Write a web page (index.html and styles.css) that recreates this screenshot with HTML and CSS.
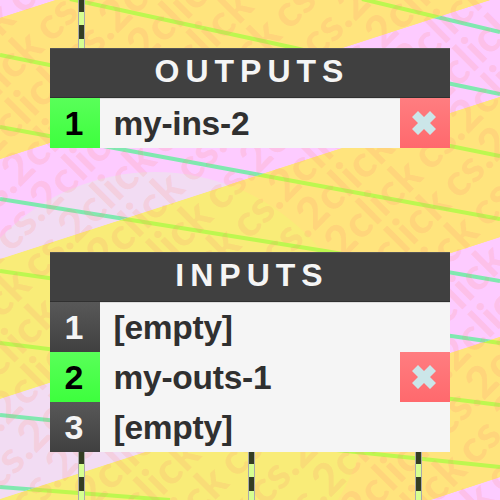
FILE: index.html
```
<!DOCTYPE html>
<html lang="en">
<head>
<meta charset="utf-8">
<title>Connections</title>
<link rel="stylesheet" href="styles.css">
</head>
<body>
<svg class="backdrop" viewBox="0 0 500 500" aria-hidden="true">
  <defs>
    <path id="bands" d="M0 18L56 0H0zM0 159L490 0H500V97L0 259zM0 399L500 237V337L0 499zM430 500L500 477V500z"/>
    <path id="wires" d="M362-1L500 32M70-1L295 48Q400 74 500 94M0 55L500 156M0 127L125 150L255 174L500 219M0 199L125 219L325 251L500 281M0 271L500 343M0 343L500 405M0 415L500 467M0 487L170 500"/>
    <clipPath id="in-bands"><use href="#bands"/></clipPath>
  </defs>
  <circle class="disc" cx="155" cy="387" r="215"/>
  <use class="wire" href="#wires"/>
  <g clip-path="url(#in-bands)">
    <use class="band" href="#bands"/>
    <circle class="disc-band" cx="155" cy="387" r="215"/>
    <use class="wire-band" href="#wires"/>
  </g>
  <g id="marks" class="marks"></g>
</svg>
<main class="stage">
  <div class="cables"><i class="cable"></i></div>
  <section class="panel">
    <h2 class="title">OUTPUTS</h2>
    <div class="row"><span class="num on">1</span><span class="name">my-ins-2</span><button class="remove" aria-label="Remove"><svg viewBox="0 0 24 24"><path d="M6 0L12 6L18 0L24 6L18 12L24 18L18 24L12 18L6 24L0 18L6 12L0 6z"/></svg></button></div>
  </section>
  <section class="panel inputs">
    <h2 class="title">INPUTS</h2>
    <div class="row"><span class="num">1</span><span class="name">[empty]</span></div>
    <div class="row"><span class="num on">2</span><span class="name">my-outs-1</span><button class="remove" aria-label="Remove"><svg viewBox="0 0 24 24"><path d="M6 0L12 6L18 0L24 6L18 12L24 18L18 24L12 18L6 24L0 18L6 12L0 6z"/></svg></button></div>
    <div class="row"><span class="num">3</span><span class="name">[empty]</span></div>
  </section>
  <div class="cables"><i class="cable"></i><i class="cable"></i><i class="cable"></i></div>
</main>
<script src="marks.js"></script>
</body>
</html>
```
FILE: styles.css
```
* { box-sizing: border-box; }
body { margin: 0; width: 500px; height: 500px; overflow: hidden; background: #ffe47d; font-family: "Liberation Sans", Arial, sans-serif; font-weight: bold; }
.backdrop { position: absolute; inset: 0; width: 500px; height: 500px; }
.band { fill: #fdcbff; }
.disc { fill: #f9ec78; }
.disc-band { fill: #f2dcf3; }
.wire, .wire-band { fill: none; stroke: #bdf74f; stroke-width: 4; }
.wire-band { stroke: #80e8b0; }
.marks { font: 900 44px Lato, sans-serif; fill: #ff8a73; fill-opacity: .16; }
.stage { position: relative; height: 500px; padding: 0 50px; }
.cables { display: grid; grid-template-columns: 170px 167px 7px; height: 48px; padding-left: 28px; }
.cable { width: 7px; background: linear-gradient(#343d23 0 12px, #d6ff91 12px 25px, #343d23 25px 39px, #d6ff91 39px); border: solid #aaa; border-width: 0 1px; }
.panel { background: #f5f5f5; }
.inputs { margin-top: 104px; }
.title { margin: 0; height: 50px; padding: 5px 0 0 4px; background: #404040; border-top: 1px solid #555; border-bottom: 1px solid #303030; color: #f5f5f5; font-size: 32px; line-height: 34px; letter-spacing: 6px; text-align: center; }
.row { display: flex; height: 50px; }
.num { width: 50px; line-height: 51px; padding-right: 2px; font-size: 34px; text-align: center; color: #f5f5f5; background: linear-gradient(#585858, #404040); }
.num.on { color: #000; background: linear-gradient(#59ff59, #3dff3d); }
.name { flex: 1; padding-left: 13.5px; line-height: 51px; font-size: 33.5px; letter-spacing: -.25px; color: #303030; }
.title + .row .name { box-shadow: inset 0 1px #ddd; }
.remove { display: grid; place-items: center; width: 50px; height: 50px; padding: 0 2px 1px 0; border: 0; background: linear-gradient(#ff7d80, #ff696d); }
.remove svg { width: 24px; height: 24px; fill: #cbe6e9; }
```
FILE: marks.js
```
// Tiles the diagonal wordmark; rows step down-right, columns step up-right.
const layer = document.getElementById('marks');
for (let r = -14; r < 15; r++) {
  for (let c = -3; c < 4; c++) {
    const x = 249 + r * 28.2 + c * 125.2;
    const y = 240.8 + r * 28.2 - c * 125.2;
    if (x > 505 || y < -5 || x + 119 < 0 || y - 145 > 500) continue;
    const t = document.createElementNS('http://www.w3.org/2000/svg', 'text');
    t.setAttribute('transform', `translate(${x} ${y}) rotate(-45)`);
    t.setAttribute('textLength', 169);
    t.textContent = 'cs.2click';
    layer.append(t);
  }
}
```
